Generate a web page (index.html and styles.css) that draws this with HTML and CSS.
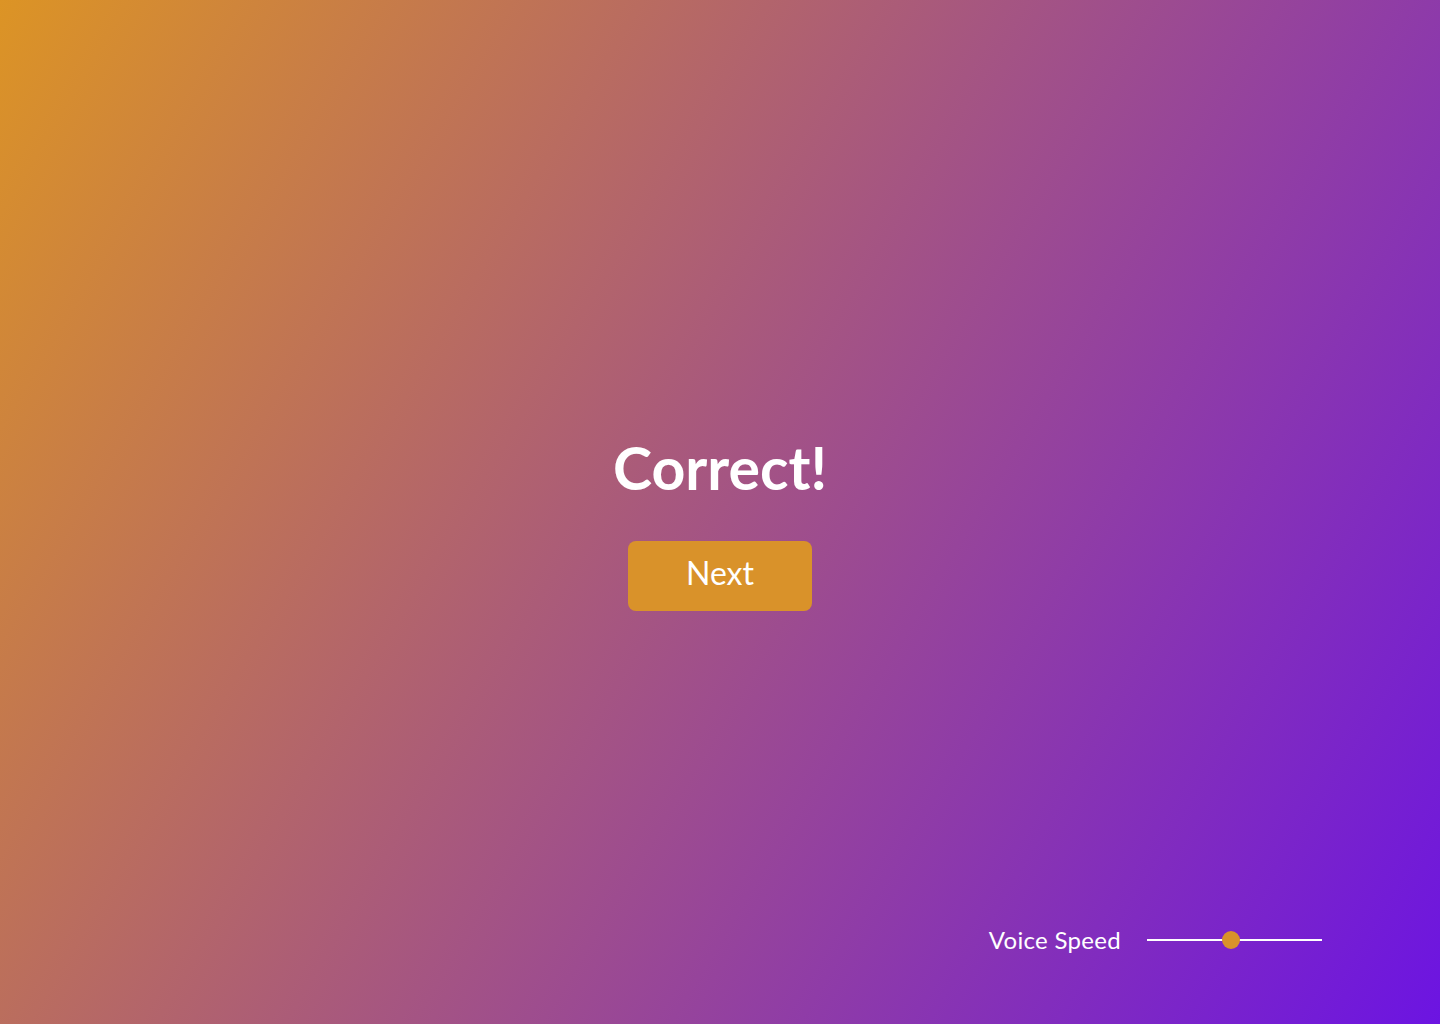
FILE: index.html
```html
<!DOCTYPE html>
<html lang="en">
<head>
<meta charset="utf-8">
<title>Correct!</title>
<link rel="stylesheet" href="styles.css">
</head>
<body>
<div class="page">
  <main class="result">
    <h1 class="result-title">Correct!</h1>
    <button class="next-btn" type="button">Next</button>
  </main>
  <footer class="controls">
    <span class="controls-label">Voice Speed</span>
    <div class="slider" role="slider" aria-valuemin="0" aria-valuemax="100" aria-valuenow="48">
      <div class="slider-track"></div>
      <div class="slider-thumb"></div>
    </div>
  </footer>
</div>
</body>
</html>
```

FILE: styles.css
```css
* { box-sizing: border-box; }
html, body { margin: 0; padding: 0; }
body {
  font-family: Lato, "Open Sans", "Liberation Sans", sans-serif;
  color: #fff;
}
.page {
  width: 100%;
  min-height: 100vh;
  height: 1024px;
  display: grid;
  grid-template: 1fr / 1fr;
  background: linear-gradient(121deg, #dc9425 0%, #6c14e2 100%);
}
.result {
  grid-area: 1 / 1;
  align-self: center;
  justify-self: center;
  display: flex;
  flex-direction: column;
  align-items: center;
  padding-top: 18px;
}
.result-title {
  margin: 0;
  font-size: 59px;
  font-weight: 700;
  line-height: 72px;
}
.next-btn {
  margin-top: 37px;
  width: 184px;
  height: 70px;
  border: none;
  border-radius: 8px;
  background: #d9922a;
  color: #fff;
  font-family: inherit;
  font-size: 32px;
  font-weight: 400;
  padding: 0 0 6px;
  cursor: pointer;
}
.controls {
  grid-area: 1 / 1;
  align-self: end;
  justify-self: end;
  display: flex;
  align-items: center;
  gap: 26px;
  padding: 0 118px 68px 0;
}
.controls-label {
  font-size: 24px;
  line-height: 32px;
  letter-spacing: 0.3px;
}
.slider {
  position: relative;
  width: 175px;
  height: 18px;
  display: flex;
  align-items: center;
}
.slider-track {
  width: 100%;
  height: 2px;
  background: #fff;
}
.slider-thumb {
  position: absolute;
  left: 75px;
  top: 0;
  width: 18px;
  height: 18px;
  border-radius: 50%;
  background: #d9922a;
}
```
